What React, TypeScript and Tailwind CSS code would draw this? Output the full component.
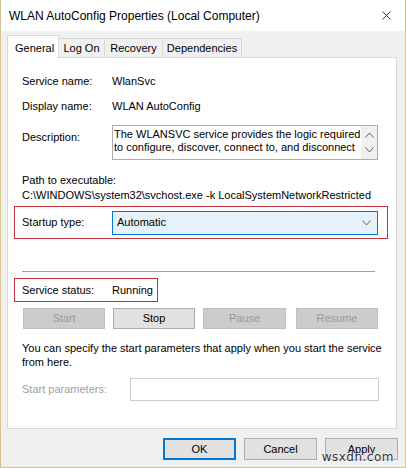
import { X } from "lucide-react"

const font = { fontFamily: '"Liberation Sans", Arial, sans-serif' }

const Chevron = ({ up = false }: { up?: boolean }) => (
  <svg width="9" height="6" viewBox="0 0 9 6" className="block">
    <path
      d={up ? "M0.5 5.5 L4.5 1 L8.5 5.5" : "M0.5 0.5 L4.5 5 L8.5 0.5"}
      fill="none"
      stroke="#606060"
      strokeWidth="1"
    />
  </svg>
)

const Button = ({
  label,
  disabled = false,
  primary = false,
  className = "",
}: {
  label: string
  disabled?: boolean
  primary?: boolean
  className?: string
}) => (
  <div
    className={
      "flex items-center justify-center border " +
      (disabled
        ? "bg-[#cccccc] border-[#bfbfbf] text-[#9a9a9a] "
        : primary
        ? "bg-[#e1e1e1] border-[#0078d7] border-2 text-black "
        : "bg-[#e1e1e1] border-[#adadad] text-black ") +
      className
    }
  >
    {label}
  </div>
)

const App = () => {
  return (
    <div
      className="relative w-[406px] h-[468px] flex flex-col border-x border-b border-[#d6c48e] bg-[#f0f0f0] text-[11px] text-black overflow-hidden whitespace-nowrap"
      style={font}
    >
      {/* title bar */}
      <div className="h-[31px] bg-white flex items-center justify-between pl-[8px] pr-[11px] text-[12px]">
        <span>WLAN AutoConfig Properties (Local Computer)</span>
        <X className="w-[15px] h-[15px] text-black" strokeWidth={1.2} />
      </div>

      <div className="flex flex-col pl-[6px]">
        {/* tabs */}
        <div className="flex items-end h-[27px] relative z-10">
          <div className="h-[23px] w-[52px] bg-white border border-[#d9d9d9] border-b-0 flex items-start pt-[4px] pl-[7px]">
            General
          </div>
          <div className="h-[20px] w-[46px] border border-[#d9d9d9] border-b-0 border-l-0 flex items-center justify-center">
            Log On
          </div>
          <div className="h-[20px] w-[58px] border border-[#d9d9d9] border-b-0 border-l-0 flex items-center justify-center">
            Recovery
          </div>
          <div className="h-[20px] w-[79px] border border-[#d9d9d9] border-b-0 border-l-0 flex items-center justify-center">
            Dependencies
          </div>
        </div>

        {/* tab panel */}
        <div className="-mt-px w-[390px] h-[372px] bg-white border border-[#d9d9d9] flex flex-col">
          <div className="flex items-center h-[15px] mt-[16px] pl-[14px]">
            <span className="w-[90px]">Service name:</span>
            <span>WlanSvc</span>
          </div>
          <div className="flex items-center h-[15px] mt-[10px] pl-[14px]">
            <span className="w-[90px]">Display name:</span>
            <span>WLAN AutoConfig</span>
          </div>

          <div className="flex mt-[11px] pl-[14px]">
            <span className="w-[90px] pt-[4px]">Description:</span>
            <div className="w-[266px] h-[35px] border border-[#abadb3] flex">
              <div className="flex-1 leading-[13px] pl-[1px] pt-[2px] overflow-hidden">
                The WLANSVC service provides the logic required
                <br />
                to configure, discover, connect to, and disconnect
              </div>
              <div className="w-[16px] flex flex-col items-center justify-between py-[6px] bg-[#f0f0f0]">
                <Chevron up />
                <Chevron />
              </div>
            </div>
          </div>

          <div className="h-[15px] mt-[13px] pl-[14px] flex items-center">Path to executable:</div>
          <div className="h-[15px] pl-[14px] flex items-center">
            C:\WINDOWS\system32\svchost.exe -k LocalSystemNetworkRestricted
          </div>

          <div className="ml-[6px] mt-[3px] w-[374px] h-[33px] border border-[#c8323c] flex items-center pl-[7px]">
            <span className="w-[90px]">Startup type:</span>
            <div className="w-[266px] h-[24px] bg-[#e5f1fb] border border-[#0078d7] flex items-center justify-between pl-[4px] pr-[6px]">
              <span>Automatic</span>
              <Chevron />
            </div>
          </div>

          <div className="ml-[14px] mt-[32px] w-[353px] h-px bg-[#a0a0a0]" />

          <div className="ml-[6px] mt-[6px] w-[144px] h-[24px] border border-[#c8323c] flex items-center pl-[7px]">
            <span className="w-[90px]">Service status:</span>
            <span>Running</span>
          </div>

          <div className="flex mt-[6px] h-[21px]">
            <Button label="Start" disabled className="ml-[15px] w-[82px]" />
            <Button label="Stop" className="ml-[8px] w-[82px]" />
            <Button label="Pause" disabled className="ml-[8px] w-[83px]" />
            <Button label="Resume" disabled className="ml-[10px] w-[82px]" />
          </div>

          <div className="mt-[12px] pl-[14px] leading-[14px]">
            You can specify the start parameters that apply when you start the service
            <br />
            from here.
          </div>

          <div className="flex items-center mt-[9px] pl-[14px]">
            <span className="w-[108px] text-[#a0a0a0]">Start parameters:</span>
            <div className="w-[249px] h-[23px] border border-[#cccccc]" />
          </div>
        </div>

        {/* dialog buttons */}
        <div className="flex mt-[9px] h-[22px] pl-[156px]">
          <Button label="OK" primary className="w-[73px]" />
          <Button label="Cancel" className="ml-[8px] w-[73px]" />
          <Button label="Apply" className="ml-[8px] w-[73px]" />
        </div>
      </div>

      <span
        className="absolute right-[11px] bottom-[1px] text-[12px] text-[#333] tracking-[0.5px]"
        style={{ fontFamily: '"DejaVu Sans", sans-serif', textShadow: "0 0 2px #fff, 0 0 2px #fff" }}
      >
        wsxdn.com
      </span>
    </div>
  )
}

export default App
